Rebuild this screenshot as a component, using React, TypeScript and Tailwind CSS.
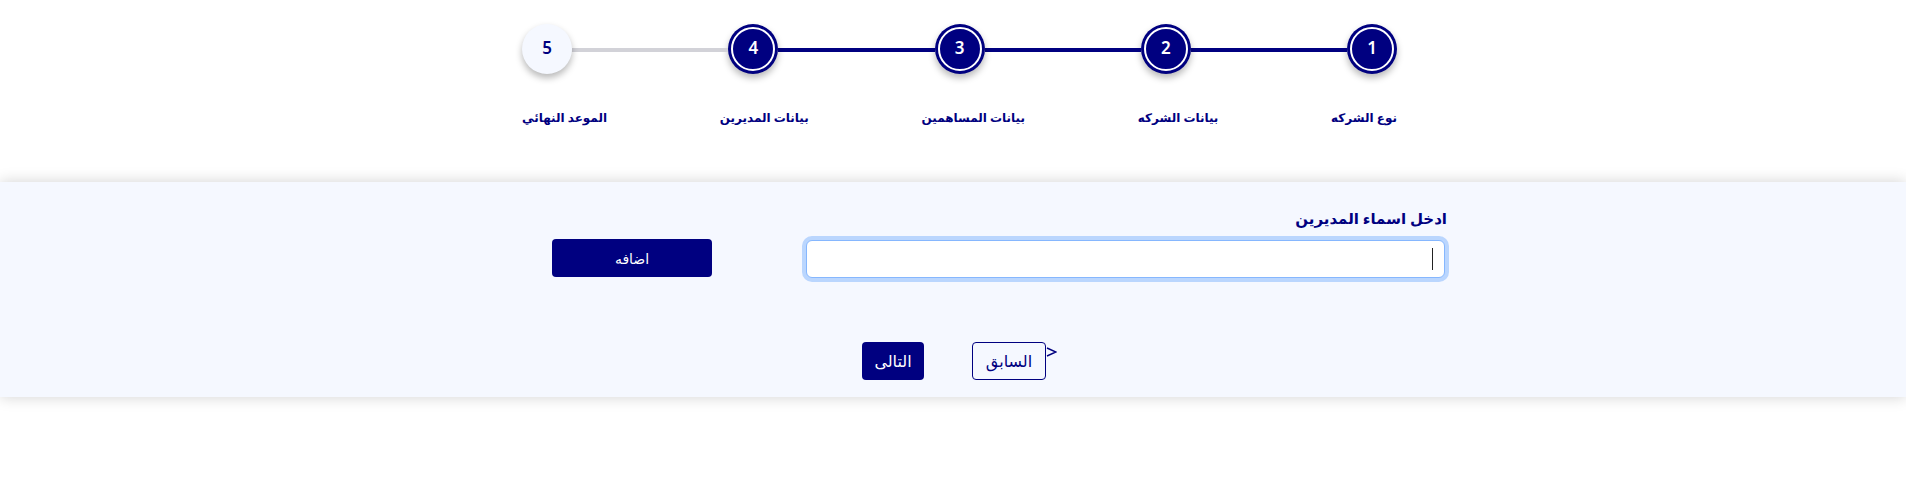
import React, { useState } from "react";

const steps = [
  { n: 1, label: "نوع الشركه", done: true },
  { n: 2, label: "بيانات الشركه", done: true },
  { n: 3, label: "بيانات المساهمين", done: true },
  { n: 4, label: "بيانات المديرين", done: true },
  { n: 5, label: "الموعد النهائي", done: false },
];

function StepCircle({ n, done }: { n: number; done: boolean }) {
  if (!done) {
    return (
      <div className="w-[50px] h-[50px] shrink-0 rounded-full bg-[#f5f8ff] shadow-[0_4px_7px_rgba(0,0,0,0.28)] flex items-center justify-center">
        <span className="text-[17px] font-semibold text-[#000080] -mt-[3px]">{n}</span>
      </div>
    );
  }
  return (
    <div className="w-[50px] h-[50px] shrink-0 rounded-full bg-[#000080] p-[3px] shadow-[0_4px_7px_rgba(0,0,0,0.28)]">
      <div className="w-full h-full rounded-full border-2 border-white flex items-center justify-center">
        <span className="text-[17px] font-semibold text-white -mt-[3px]">{n}</span>
      </div>
    </div>
  );
}

export default function App() {
  const [name, setName] = useState("");

  return (
    <div className="min-h-[495px] bg-white" style={{ fontFamily: '"Noto Sans", "DejaVu Sans", sans-serif' }}>
      {/* stepper */}
      <div className="flex justify-center pl-[13px] pt-[24px]">
        <div className="w-[875px]">
          <div dir="rtl" className="flex items-center">
            {steps.map((s, i) => (
              <React.Fragment key={s.n}>
                <StepCircle n={s.n} done={s.done} />
                {i < steps.length - 1 && (
                  <div className={`flex-1 h-[4px] mt-[1px] ${steps[i + 1].done ? "bg-[#000080]" : "bg-[#d2d2d8]"}`} />
                )}
              </React.Fragment>
            ))}
          </div>
          <div dir="rtl" className="flex justify-between mt-[34px]">
            {steps.map((s) => (
              <span key={s.n} className="text-[12px] leading-[20px] font-bold text-[#000080]">
                {s.label}
              </span>
            ))}
          </div>
        </div>
      </div>

      {/* form panel */}
      <div className="mt-[54px] h-[215px] bg-[#f5f8ff] shadow-[0_0_14px_rgba(0,0,0,0.18)] pt-[26px]">
        <div dir="rtl" className="ml-[552px] w-[895px] flex items-end gap-[92px]">
          <div className="w-[643px] flex flex-col gap-[12px]">
            <label className="text-[15px] leading-[20px] font-bold text-[#000080]">ادخل اسماء المديرين</label>
            <div className="relative">
              <input
                dir="rtl"
                value={name}
                onChange={(e) => setName(e.target.value)}
                className="w-[639px] h-[38px] mx-[2px] rounded-[6px] bg-white border border-[#86b7fe] shadow-[0_0_0_4px_rgba(13,110,253,0.25)] px-3 outline-none text-[#000080] caret-black"
              />
              {name === "" && <span className="absolute right-[14px] top-[8px] w-px h-[22px] bg-[#222]" />}
            </div>
          </div>
          <button className="w-[160px] h-[38px] mb-[1px] rounded-[4px] bg-[#000080] text-white text-[14px]">
            اضافه
          </button>
        </div>

        <div className="flex justify-center pl-[13px] mt-[64px]">
          <div className="flex items-start">
            <button className="w-[62px] h-[38px] rounded-[4px] bg-[#000080] text-white text-[16px]">التالى</button>
            <button className="ml-[48px] w-[74px] h-[38px] rounded-[4px] border border-[#000080] bg-[#f5f8ff] text-[#000080] text-[16px]">
              السابق
            </button>
            <svg width="11" height="10" viewBox="0 0 11 10" className="mt-[5px]">
              <path d="M1 1 L10 5 L1 9" fill="none" stroke="#000080" strokeWidth="1.4" />
            </svg>
          </div>
        </div>
      </div>
    </div>
  );
}
